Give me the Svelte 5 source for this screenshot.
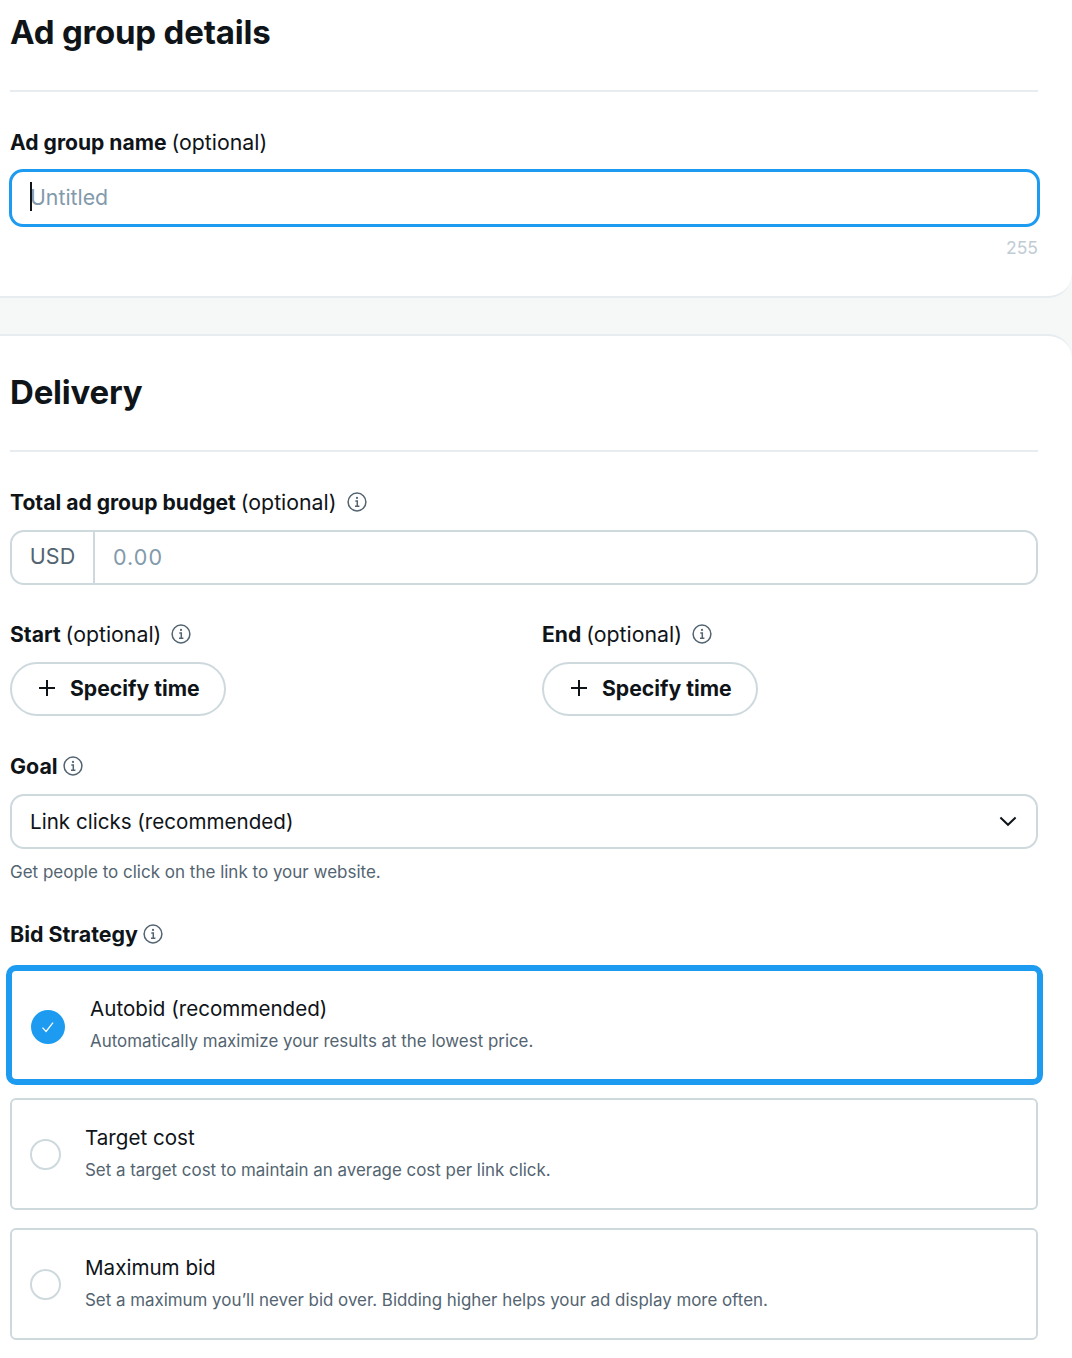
<script>
	const options = [
		{ title: 'Autobid (recommended)', text: 'Automatically maximize your results at the lowest price.', selected: true },
		{ title: 'Target cost', text: 'Set a target cost to maintain an average cost per link click.', selected: false },
		{ title: 'Maximum bid', text: 'Set a maximum you’ll never bid over. Bidding higher helps your ad display more often.', selected: false }
	];
</script>

{#snippet info()}
	<svg class="info" viewBox="0 0 20 20" width="20" height="20" fill="none" stroke="#536471" aria-hidden="true">
		<circle cx="10" cy="10" r="8.9" stroke-width="1.5" />
		<path d="M8.3 8.9H10.3V14.2M8 14.2H12.4" stroke-width="1.5" />
		<circle cx="10" cy="5.9" r="1.1" fill="#536471" stroke="none" />
	</svg>
{/snippet}

{#snippet specify()}
	<button type="button" class="pill">
		<svg viewBox="0 0 18 18" width="18" height="18" fill="none" stroke="#0f1419" stroke-width="2" aria-hidden="true">
			<path d="M9 1v16M1 9h16" />
		</svg>
		<span>Specify time</span>
	</button>
{/snippet}

<div class="page">
	<section class="card first">
		<h2>Ad group details</h2>
		<hr />
		<div class="label first-label"><span><b>Ad group name</b> (optional)</span></div>
		<div class="name-input"><i class="caret"></i><span>Untitled</span></div>
		<div class="count">255</div>
	</section>

	<section class="card second">
		<h2>Delivery</h2>
		<hr />
		<div class="label first-label"><span><b>Total ad group budget</b> (optional)</span>{@render info()}</div>
		<div class="budget">
			<span class="currency">USD</span>
			<span class="amount">0.00</span>
		</div>

		<div class="dates">
			<div>
				<div class="label"><span><b>Start</b> (optional)</span>{@render info()}</div>
				{@render specify()}
			</div>
			<div>
				<div class="label"><span><b>End</b> (optional)</span>{@render info()}</div>
				{@render specify()}
			</div>
		</div>

		<div class="label tight goal"><span><b>Goal</b></span>{@render info()}</div>
		<div class="select">
			<span>Link clicks (recommended)</span>
			<svg viewBox="0 0 18 11" width="18" height="11" fill="none" stroke="#0f1419" stroke-width="2" aria-hidden="true">
				<path d="M1.4 1.6L9 8.8l7.6-7.2" />
			</svg>
		</div>
		<p class="help">Get people to click on the link to your website.</p>

		<div class="label tight bid"><span><b>Bid Strategy</b></span>{@render info()}</div>
		<div class="options">
			{#each options as option}
				<div class="option" class:selected={option.selected}>
					{#if option.selected}
						<span class="check">
							<svg viewBox="0 0 16 16" width="16" height="16" fill="none" stroke="#fff" stroke-width="1.3" aria-hidden="true">
								<path d="M2.5 8.6l3.6 3.8L13 3.6" />
							</svg>
						</span>
					{:else}
						<span class="radio"></span>
					{/if}
					<div class="option-text">
						<div class="option-title">{option.title}</div>
						<div class="option-sub">{option.text}</div>
					</div>
				</div>
			{/each}
		</div>
	</section>
</div>

<style>
	:global(body) {
		background: #f6f8f8;
	}

	.page {
		width: 1072px;
		height: 1358px;
		overflow: hidden;
		font-family: Inter, 'Noto Sans', sans-serif;
		color: #0f1419;
	}

	.card {
		box-sizing: border-box;
		background: #fff;
		padding: 0 34px 0 10px;
		border: 0 solid #e6ecf0;
	}

	.first {
		height: 298px;
		border-bottom-width: 2px;
		border-bottom-right-radius: 24px;
	}

	.second {
		height: 1024px;
		margin-top: 36px;
		border-top-width: 2px;
		border-top-right-radius: 24px;
	}

	h2 {
		margin: 0;
		font-size: 33px;
		line-height: 40px;
		font-weight: 700;
		letter-spacing: -0.2px;
		padding-top: 12px;
	}

	.second h2 {
		padding-top: 36px;
	}

	hr {
		height: 2px;
		margin: 38px 0 0;
		border: 0;
		background: #e6ecf0;
	}

	.label {
		display: flex;
		align-items: center;
		height: 24px;
		font-size: 21.3px;
		line-height: 24px;
		white-space: pre;
		word-spacing: -1px;
	}

	.label b {
		font-weight: 700;
		font-size: 21.1px;
		word-spacing: 0;
	}

	.tight b {
		font-size: 21.4px;
	}

	.first-label {
		margin-top: 38px;
	}

	.info {
		margin-left: 10px;
	}

	.tight .info {
		margin-left: 5px;
	}

	.name-input {
		position: relative;
		display: flex;
		align-items: center;
		box-sizing: border-box;
		height: 58px;
		margin: 15px -2px 0 -1px;
		padding: 0 0 2px 18px;
		border: 3px solid #1d9bf0;
		border-radius: 14px;
		font-size: 21.3px;
		color: #829aab;
	}

	.caret {
		position: absolute;
		left: 18px;
		top: 10px;
		width: 2px;
		height: 29px;
		background: #0f1419;
	}

	.count {
		margin-top: 9px;
		text-align: right;
		font-size: 17.5px;
		line-height: 24px;
		color: #bfccd4;
	}

	.budget {
		display: flex;
		align-items: stretch;
		box-sizing: border-box;
		height: 55px;
		margin-top: 16px;
		border: 2px solid #ced9de;
		border-radius: 14px;
		font-size: 21.5px;
		line-height: 24px;
	}

	.currency {
		display: flex;
		align-items: center;
		justify-content: center;
		width: 81px;
		padding-bottom: 4px;
		border-right: 2px solid #ced9de;
		color: #536471;
	}

	.amount {
		display: flex;
		align-items: center;
		padding: 0 0 2px 18px;
		color: #829aab;
		letter-spacing: 1.1px;
	}

	.dates {
		display: grid;
		grid-template-columns: 532px 1fr;
		margin-top: 37px;
	}

	.pill {
		display: flex;
		align-items: center;
		gap: 14px;
		box-sizing: border-box;
		width: 216px;
		height: 54px;
		margin-top: 16px;
		padding: 0 0 2px 26px;
		background: #fff;
		border: 2px solid #ced9de;
		border-radius: 27px;
		font: 700 21.2px Inter, 'Noto Sans', sans-serif;
		color: #0f1419;
	}

	.goal {
		margin-top: 38px;
	}

	.select {
		display: flex;
		align-items: center;
		justify-content: space-between;
		box-sizing: border-box;
		height: 55px;
		margin-top: 16px;
		padding: 0 19px 0 18px;
		border: 2px solid #ced9de;
		border-radius: 14px;
		font-size: 20.6px;
	}

	.help {
		margin: 11px 0 0;
		font-size: 17px;
		line-height: 24px;
		color: #536471;
	}

	.bid {
		margin-top: 38px;
	}

	.options {
		display: flex;
		flex-direction: column;
		gap: 18px;
		margin-top: 19px;
	}

	.option {
		display: flex;
		align-items: center;
		box-sizing: border-box;
		height: 112px;
		padding-left: 18px;
		border: 2px solid #ced9de;
		border-radius: 6px;
	}

	.selected {
		height: 120px;
		margin: 0 -5px -5px -4px;
		padding-left: 19px;
		border: 6px solid #1d9bf0;
		border-radius: 10px;
	}

	.check {
		display: flex;
		align-items: center;
		justify-content: center;
		flex: none;
		width: 34px;
		height: 34px;
		margin: 3px 25px 0 0;
		border-radius: 50%;
		background: #1d9bf0;
	}

	.radio {
		flex: none;
		box-sizing: border-box;
		width: 31px;
		height: 31px;
		margin-right: 24px;
		border: 2px solid #ced9de;
		border-radius: 50%;
	}

	.option-text {
		padding-bottom: 2px;
	}

	.option-title {
		font-size: 20.6px;
		line-height: 28px;
	}

	.option-sub {
		margin-top: 6px;
		font-size: 16.9px;
		line-height: 24px;
		color: #536471;
	}
</style>
